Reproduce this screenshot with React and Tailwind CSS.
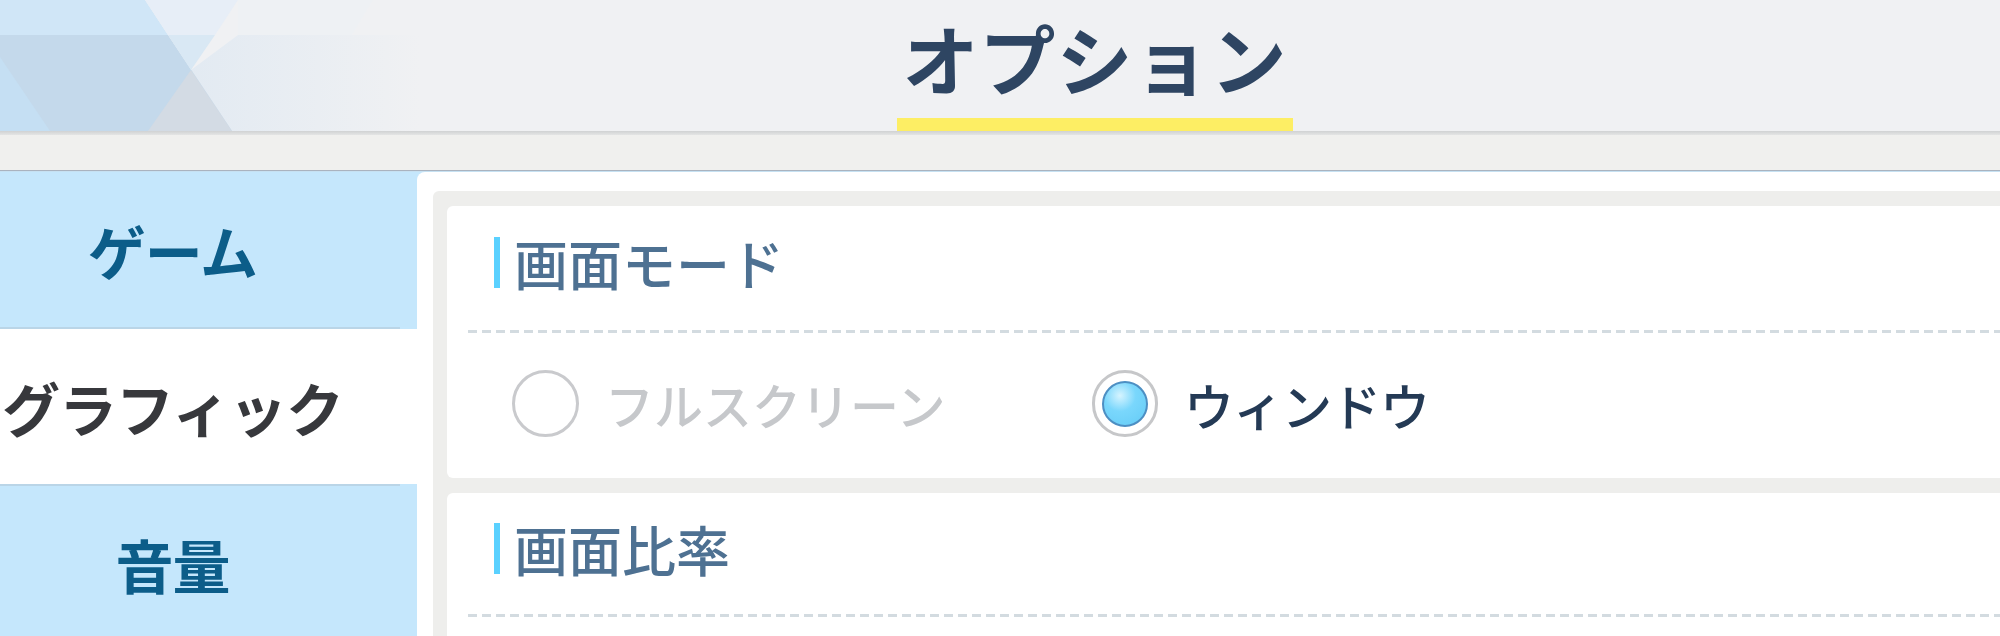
import { Fragment } from 'react'

const jp = "font-['Noto_Sans_CJK_JP','Noto_Sans',sans-serif]"

function HeaderDeco() {
  return (
    <svg className="absolute left-0 top-0" width="420" height="131" viewBox="0 0 420 131" aria-hidden>
      <defs>
        <linearGradient id="fadeLow" x1="0" x2="1" y1="0" y2="0">
          <stop offset="0" stopColor="#e0e9f2" />
          <stop offset="1" stopColor="#f0f1f3" />
        </linearGradient>
      </defs>
      <polygon points="238,35 420,35 420,131 148,131 191,70" fill="url(#fadeLow)" />
      <polygon points="238,0 373,0 352,35 238,35" fill="#eef1f4" />
      <polygon points="0,0 145,0 168,35 0,35" fill="#d0e6f7" />
      <polygon points="0,35 168,35 232,131 0,131" fill="#c4d9eb" />
      <polygon points="0,57 50,131 0,131" fill="#c5dff3" />
      <polygon points="145,0 238,0 215,35 168,35" fill="#e7eef7" />
      <polygon points="168,35 215,35 191,70" fill="#d9e8f4" />
      <polygon points="148,131 191,70 232,131" fill="#d3dbe4" />
    </svg>
  )
}

function Separator() {
  return <div className="h-[2px] w-[400px] bg-[#bad5e7]" />
}

function SideItem({ label, active }) {
  return (
    <div
      className={`flex h-[155px] items-center justify-center pr-[72px] ${
        active ? 'bg-white text-[#37383c]' : 'bg-[#c5e7fc] text-[#0c5d89]'
      }`}
    >
      <span className="whitespace-nowrap text-[58px] font-bold leading-none tracking-[-1px]">
        {label}
      </span>
    </div>
  )
}

function SectionTitle({ children }) {
  return (
    <div className="flex h-[51px] items-center pl-[47px]">
      <div className="h-[51px] w-[6px] bg-[#5ad1ff]" />
      <span className="ml-[14px] whitespace-nowrap text-[54px] font-medium leading-none text-[#4e7192]">
        {children}
      </span>
    </div>
  )
}

function Dashed() {
  return (
    <div className="ml-[21px] h-[3px] bg-[repeating-linear-gradient(90deg,#d3dbe0_0_9px,transparent_9px_14px)]" />
  )
}

export default function App() {
  const menu = [
    { label: 'ゲーム', active: false },
    { label: 'グラフィック', active: true },
    { label: '音量', active: false },
  ]

  return (
    <div className={`${jp} h-[636px] w-[2000px] overflow-hidden bg-white`}>
      {/* header */}
      <div className="relative h-[131px] overflow-hidden bg-[#f0f1f3]">
        <HeaderDeco />
        <div className="relative flex h-full flex-col items-center justify-end pl-[190px]">
          <span className="text-[76px] font-bold leading-none tracking-[1px] text-[#2e4562]">
            オプション
          </span>
          <div className="mt-[23px] h-[13px] w-[396px] bg-[#fdee64]" />
        </div>
      </div>
      <div className="h-[4px] bg-[linear-gradient(#d0d2d3,#e4e5e5)]" />
      <div className="h-[35px] bg-[#f0f0ee]" />
      <div className="h-[1px] bg-[#aab3bf]" />
      <div className="h-[1px] bg-[#c6e1f2]" />

      {/* body */}
      <div className="flex bg-[#c5e7fc]">
        <div className="w-[417px] shrink-0">
          {menu.map((m, i) => (
            <Fragment key={m.label}>
              {i > 0 && <Separator />}
              <SideItem label={m.label} active={m.active} />
            </Fragment>
          ))}
        </div>
        <div className="flex-1 rounded-tl-[8px] bg-white pl-[16px] pt-[19px]">
          <div className="flex flex-col gap-[15px] rounded-tl-[6px] bg-[#eeeeec] pl-[14px] pt-[15px]">
            <div className="rounded-l-[6px] bg-white pb-[41px] pt-[31px]">
              <SectionTitle>画面モード</SectionTitle>
              <div className="mt-[42px]">
                <Dashed />
              </div>
              <div className="mt-[37px] flex h-[67px] items-center pl-[65px]">
                <div className="flex w-[580px] items-center">
                  <div className="h-[67px] w-[67px] shrink-0 rounded-full border-[3px] border-[#c9cacd]" />
                  <span className="ml-[26px] whitespace-nowrap text-[49px] font-medium leading-none text-[#c6c8cb]">
                    フルスクリーン
                  </span>
                </div>
                <div className="flex items-center">
                  <div className="flex h-[67px] w-[66px] shrink-0 items-center justify-center rounded-full border-[3px] border-[#c6c7c9] bg-white">
                    <div className="h-[46px] w-[46px] rounded-full border-2 border-[#4d8fc3] bg-[radial-gradient(circle_at_38%_30%,#d6f4ff_0%,#7ad7fc_40%,#63cbf6_100%)]" />
                  </div>
                  <span className="ml-[26px] whitespace-nowrap text-[50px] font-medium leading-none tracking-[-1px] text-[#243a55]">
                    ウィンドウ
                  </span>
                </div>
              </div>
            </div>
            <div className="h-[200px] rounded-l-[6px] bg-white pt-[30px]">
              <SectionTitle>画面比率</SectionTitle>
              <div className="mt-[40px]">
                <Dashed />
              </div>
            </div>
          </div>
        </div>
      </div>
    </div>
  )
}
